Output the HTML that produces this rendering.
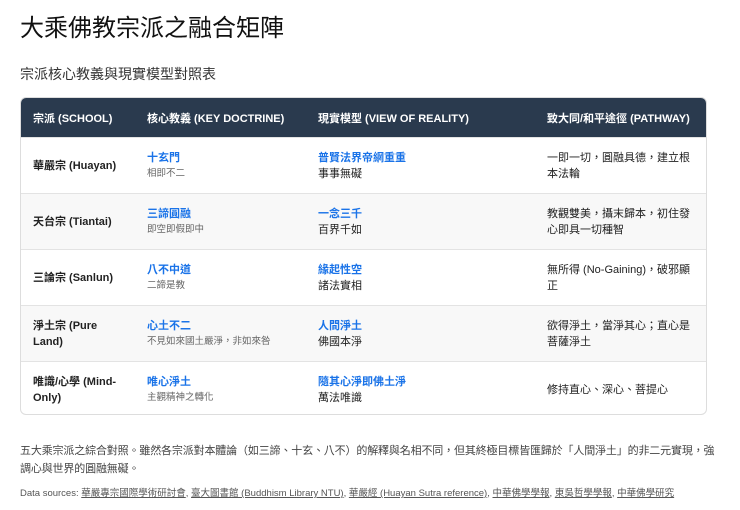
<!DOCTYPE html>
<html><head><meta charset="utf-8"><style>
body{margin:0;background:#fff;font-family:"Liberation Sans","Noto Sans CJK TC",sans-serif;color:#222;width:740px;height:510px;overflow:hidden}
h1{position:absolute;left:20px;top:8px;margin:0;font-size:24px;font-weight:normal;color:#111}
h2{position:absolute;left:20px;top:64px;margin:0;font-size:14px;font-weight:normal;color:#333}
.tbl{position:absolute;left:20px;top:97px;width:687px;height:318px;border:1px solid #ddd;border-radius:6px;overflow:hidden;box-sizing:border-box}
table{border-collapse:collapse;width:100%;font-size:11px}
th{background:#2a3a4e;color:#fff;font-weight:bold;text-align:left;height:39px;padding:0;font-size:11px}
td{height:55px;padding:0;border-top:1px solid #e3e3e3;vertical-align:middle;line-height:16px}
tr:nth-child(odd) td{background:#f8f8f8}
td.c1{padding-left:12px;width:114px;font-weight:bold;color:#222}
th.c1{padding-left:12px;width:114px}
.c2{width:171px}.c3{width:229px}
.b{color:#1a73e8;font-weight:bold}
.s{color:#666;font-size:9.5px}
p{position:absolute;left:20px;margin:0}
.para{top:442px;font-size:11px;line-height:18px;color:#444;width:700px;letter-spacing:-0.15px}
.src{top:485px;font-size:9.5px;color:#555}
.src u{text-decoration:underline}
</style></head><body>
<h1>大乘佛教宗派之融合矩陣</h1>
<h2>宗派核心教義與現實模型對照表</h2>
<div class="tbl"><table>
<tr><th class="c1">宗派 (SCHOOL)</th><th class="c2">核心教義 (KEY DOCTRINE)</th><th class="c3">現實模型 (VIEW OF REALITY)</th><th>致大同/和平途徑 (PATHWAY)</th></tr>
<tr><td class="c1">華嚴宗 (Huayan)</td><td><div class="b">十玄門</div><div class="s">相即不二</div></td><td><div class="b">普賢法界帝網重重</div><div>事事無礙</div></td><td>一即一切，圓融具德，建立根<br>本法輪</td></tr>
<tr><td class="c1">天台宗 (Tiantai)</td><td><div class="b">三諦圓融</div><div class="s">即空即假即中</div></td><td><div class="b">一念三千</div><div>百界千如</div></td><td>教觀雙美，攝末歸本，初住發<br>心即具一切種智</td></tr>
<tr><td class="c1">三論宗 (Sanlun)</td><td><div class="b">八不中道</div><div class="s">二諦是教</div></td><td><div class="b">緣起性空</div><div>諸法實相</div></td><td>無所得 (No-Gaining)，破邪顯<br>正</td></tr>
<tr><td class="c1">淨土宗 (Pure<br>Land)</td><td><div class="b">心土不二</div><div class="s">不見如來國土嚴淨，非如來咎</div></td><td><div class="b">人間淨土</div><div>佛國本淨</div></td><td>欲得淨土，當淨其心；直心是<br>菩薩淨土</td></tr>
<tr><td class="c1">唯識/心學 (Mind-<br>Only)</td><td><div class="b">唯心淨土</div><div class="s">主觀精神之轉化</div></td><td><div class="b">隨其心淨即佛土淨</div><div>萬法唯識</div></td><td>修持直心、深心、菩提心</td></tr>
</table></div>
<p class="para">五大乘宗派之綜合對照。雖然各宗派對本體論（如三諦、十玄、八不）的解釋與名相不同，但其終極目標皆匯歸於「人間淨土」的非二元實現，強<br>調心與世界的圓融無礙。</p>
<p class="src">Data sources: <u>華嚴專宗國際學術研討會</u>, <u>臺大圖書館 (Buddhism Library NTU)</u>, <u>華嚴經 (Huayan Sutra reference)</u>, <u>中華佛學學報</u>, <u>東吳哲學學報</u>, <u>中華佛學研究</u></p>
</body></html>
